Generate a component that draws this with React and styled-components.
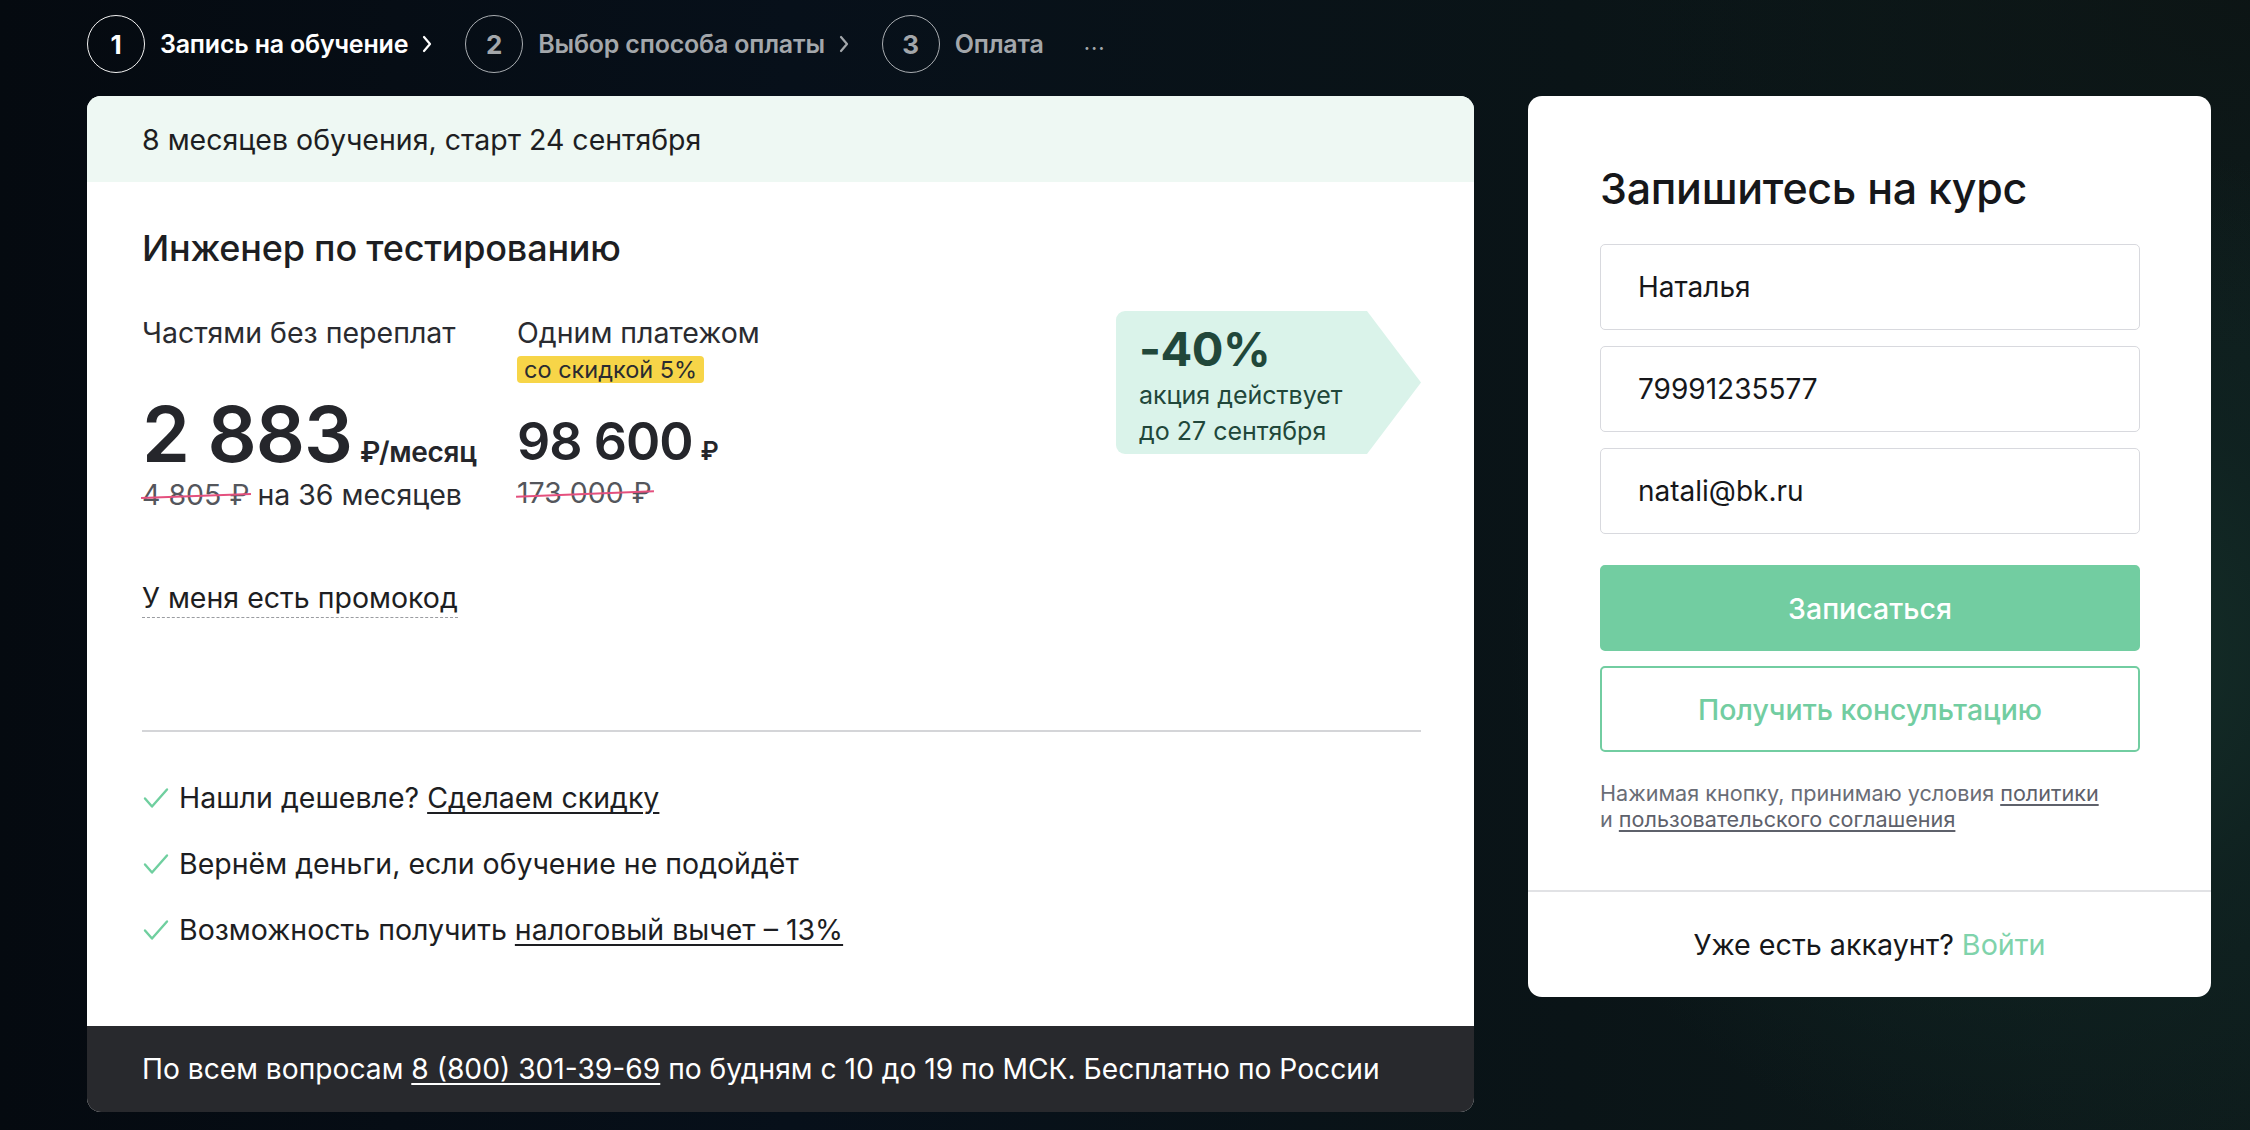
import React from "react";
import styled, { createGlobalStyle } from "styled-components";

const Global = createGlobalStyle`
  html, body { margin: 0; padding: 0; }
  body {
    font-family: Inter, "Noto Sans", Arial, sans-serif;
    background: #060b11;
    -webkit-font-smoothing: antialiased;
  }
  * { box-sizing: border-box; }
`;

const Page = styled.div`
  width: 2250px;
  height: 1130px;
  overflow: hidden;
  padding: 15px 0 0 87px;
  background:
    radial-gradient(ellipse 700px 650px at 92% 58%, rgba(22, 50, 43, 0.95) 0%, rgba(16, 36, 34, 0.7) 40%, rgba(10, 20, 22, 0) 80%),
    radial-gradient(ellipse 900px 500px at 100% 0%, rgba(12, 20, 20, 0.9) 0%, rgba(12, 20, 20, 0) 70%),
    linear-gradient(90deg, #050a10 0%, #07101a 35%, #0a1417 70%, #0e1c1c 100%);
`;

const Stepper = styled.nav`
  display: flex;
  align-items: center;
  height: 58px;
`;

const StepCircle = styled.span`
  width: 58px;
  height: 58px;
  border-radius: 50%;
  border: 1.5px solid ${(p) => (p.$active ? "#f2f2f2" : "#a9adb1")};
  display: flex;
  align-items: center;
  justify-content: center;
  font-size: 26px;
  font-weight: 700;
  color: ${(p) => (p.$active ? "#ffffff" : "#a3a7ab")};
  flex-shrink: 0;
`;

const StepLabel = styled.span`
  margin-left: 15px;
  font-size: 25px;
  font-weight: 600;
  letter-spacing: -0.2px;
  color: ${(p) => (p.$active ? "#ffffff" : "#a3a7ab")};
  white-space: nowrap;
`;

const Chevron = styled.svg`
  margin: 0 33px 0 14px;
  flex-shrink: 0;
`;

const Dots = styled.span`
  margin-left: 40px;
  font-size: 22px;
  color: #a3a7ab;
  letter-spacing: 1px;
  transform: translateY(-2px);
`;

const Columns = styled.div`
  display: flex;
  align-items: flex-start;
  gap: 54px;
  margin-top: 23px;
`;

const CourseCard = styled.section`
  width: 1387px;
  height: 1016px;
  background: #ffffff;
  border-radius: 14px;
  overflow: hidden;
  display: flex;
  flex-direction: column;
  color: #1d1e22;
`;

const CardTop = styled.div`
  height: 86px;
  background: #eef8f3;
  display: flex;
  align-items: center;
  padding-left: 55px;
  font-size: 28.5px;
  color: #1d1e22;
`;

const CardBody = styled.div`
  padding: 0 53px 0 55px;
  display: flex;
  flex-direction: column;
`;

const CourseTitle = styled.h2`
  margin: 46px 0 0;
  font-size: 36px;
  line-height: 40px;
  font-weight: 500;
  letter-spacing: -0.2px;
`;

const PriceRow = styled.div`
  display: flex;
  align-items: flex-start;
  margin-top: 48px;
`;

const PriceCol = styled.div`
  width: ${(p) => p.$w || "auto"};
  display: flex;
  flex-direction: column;
  align-items: flex-start;
`;

const PriceLabel = styled.div`
  font-size: 28.5px;
  line-height: 34px;
  color: #2a2b30;
  white-space: nowrap;
`;

const SaleTag = styled.span`
  margin-top: 6px;
  background: #f7d548;
  border-radius: 4px;
  padding: 0 7px;
  height: 27px;
  line-height: 27px;
  font-size: 23.5px;
  color: #2a2b30;
`;

const BigPrice = styled.div`
  display: flex;
  align-items: baseline;
  font-weight: 600;
  color: #25262b;
  margin-top: ${(p) => p.$mt || "0"};
  white-space: nowrap;
`;

const BigNum = styled.span`
  font-size: ${(p) => p.$size};
  line-height: ${(p) => p.$lh};
  letter-spacing: -1px;
`;

const Unit = styled.span`
  font-size: ${(p) => p.$size};
  line-height: 1;
  margin-left: 8px;
  letter-spacing: -0.3px;
`;

const OldPrice = styled.div`
  margin-top: 3px;
  font-size: 28.5px;
  line-height: 32px;
  color: #2a2b30;
  white-space: nowrap;
`;

const Struck = styled.span`
  position: relative;
  color: #54565c;
  &::after {
    content: "";
    position: absolute;
    left: -1px;
    right: -2px;
    top: 52%;
    height: 2px;
    background: #e4507e;
    transform: rotate(-2.2deg);
  }
`;

const PromoBadge = styled.div`
  margin-left: auto;
  margin-top: -5px;
  width: 305px;
  height: 143px;
  background: #daf3ea;
  border-radius: 9px;
  clip-path: polygon(0 0, 82.3% 0, 100% 50%, 82.3% 100%, 0 100%);
  padding: 10px 0 0 23px;
  color: #21473a;
`;

const PromoBig = styled.div`
  font-size: 47px;
  line-height: 56px;
  font-weight: 700;
  letter-spacing: -0.5px;
`;

const PromoText = styled.div`
  font-size: 25px;
  line-height: 36px;
`;

const PromoLink = styled.span`
  align-self: flex-start;
  margin-top: 70px;
  font-size: 28.5px;
  line-height: 34px;
  color: #1d1e22;
  border-bottom: 1.5px dashed #9a9ca1;
  padding-bottom: 2px;
`;

const Divider = styled.hr`
  margin: ${(p) => p.$m || "0"};
  border: 0;
  border-top: 2px solid #d4d5d8;
`;

const Perks = styled.ul`
  list-style: none;
  margin: 48px 0 0;
  padding: 0;
  display: flex;
  flex-direction: column;
  gap: 30px;
`;

const Perk = styled.li`
  display: flex;
  align-items: center;
  font-size: 28.5px;
  line-height: 36px;
  color: #1d1e22;
  svg { margin: 0 10px 0 1px; flex-shrink: 0; }
`;

const Link = styled.span`
  text-decoration: underline;
  text-decoration-thickness: 2px;
  text-underline-offset: 4px;
  color: ${(p) => p.$color || "inherit"};
`;

const CardFooter = styled.footer`
  margin-top: auto;
  height: 86px;
  background: #28292d;
  display: flex;
  align-items: center;
  padding-left: 55px;
  font-size: 28.2px;
  color: #ffffff;
`;

const FormCard = styled.section`
  width: 683px;
  height: 901px;
  background: #ffffff;
  border-radius: 14px;
  display: flex;
  flex-direction: column;
`;

const FormBody = styled.div`
  padding: 67px 71px 0 72px;
  display: flex;
  flex-direction: column;
`;

const FormTitle = styled.h2`
  margin: 0;
  font-size: 43px;
  line-height: 50px;
  font-weight: 500;
  color: #16171a;
  letter-spacing: -0.3px;
`;

const Fields = styled.div`
  margin-top: 31px;
  display: flex;
  flex-direction: column;
  gap: 16px;
`;

const Field = styled.div`
  height: 86px;
  border: 1.5px solid #d8d9de;
  border-radius: 5px;
  display: flex;
  align-items: center;
  padding-left: 37px;
  font-size: 28px;
  color: #16171a;
`;

const Button = styled.div`
  height: 86px;
  border-radius: 5px;
  display: flex;
  align-items: center;
  justify-content: center;
  font-size: 28.5px;
  font-weight: 500;
  margin-top: ${(p) => p.$mt};
  background: ${(p) => (p.$outline ? "#ffffff" : "#72cda1")};
  color: ${(p) => (p.$outline ? "#72cda1" : "#ffffff")};
  border: 2px solid #72cda1;
`;

const Note = styled.p`
  margin: 28px 0 0;
  font-size: 21.6px;
  line-height: 26px;
  color: #6a6d76;
`;

const NoteLink = styled.span`
  color: #5e616b;
  text-decoration: underline;
  text-decoration-thickness: 1.5px;
  text-underline-offset: 3px;
`;

const FormFooter = styled.div`
  margin-top: auto;
  height: 107px;
  border-top: 2px solid #e1e2e5;
  display: flex;
  align-items: center;
  justify-content: center;
  font-size: 28.7px;
  color: #16171a;
`;

const Login = styled.span`
  color: #7fd3ab;
  margin-left: 8px;
`;

const Check = () => (
  <svg width="26" height="22" viewBox="0 0 26 22" fill="none">
    <path d="M2 11.5 L9 19.5 L24 2.5" stroke="#6fcf9f" strokeWidth="2.4" strokeLinecap="round" strokeLinejoin="round" />
  </svg>
);

const ChevronIcon = ({ color }) => (
  <Chevron width="10" height="18" viewBox="0 0 10 18" fill="none">
    <path d="M2 2 L8 9 L2 16" stroke={color} strokeWidth="2.2" strokeLinecap="round" strokeLinejoin="round" />
  </Chevron>
);

export default function App() {
  return (
    <>
      <Global />
      <Page>
        <Stepper>
          <StepCircle $active>1</StepCircle>
          <StepLabel $active>Запись на обучение</StepLabel>
          <ChevronIcon color="#ffffff" />
          <StepCircle>2</StepCircle>
          <StepLabel>Выбор способа оплаты</StepLabel>
          <ChevronIcon color="#a3a7ab" />
          <StepCircle>3</StepCircle>
          <StepLabel>Оплата</StepLabel>
          <Dots>...</Dots>
        </Stepper>

        <Columns>
          <CourseCard>
            <CardTop>8 месяцев обучения, старт 24 сентября</CardTop>
            <CardBody>
              <CourseTitle>Инженер по тестированию</CourseTitle>
              <PriceRow>
                <PriceCol $w="375px">
                  <PriceLabel>Частями без переплат</PriceLabel>
                  <BigPrice $mt="42px">
                    <BigNum $size="77px" $lh="84px">2 883</BigNum>
                    <Unit $size="28px">₽/месяц</Unit>
                  </BigPrice>
                  <OldPrice>
                    <Struck>4 805 ₽</Struck> на 36 месяцев
                  </OldPrice>
                </PriceCol>
                <PriceCol>
                  <PriceLabel>Одним платежом</PriceLabel>
                  <SaleTag>со скидкой 5%</SaleTag>
                  <BigPrice $mt="27px">
                    <BigNum $size="52px" $lh="64px">98 600</BigNum>
                    <Unit $size="25px">₽</Unit>
                  </BigPrice>
                  <OldPrice>
                    <Struck>173 000 ₽</Struck>
                  </OldPrice>
                </PriceCol>
                <PromoBadge>
                  <PromoBig>-40%</PromoBig>
                  <PromoText>акция действует</PromoText>
                  <PromoText>до 27 сентября</PromoText>
                </PromoBadge>
              </PriceRow>
              <PromoLink>У меня есть промокод</PromoLink>
              <Divider $m="112px 0 0" />
              <Perks>
                <Perk>
                  <Check />
                  <span>
                    Нашли дешевле? <Link>Сделаем скидку</Link>
                  </span>
                </Perk>
                <Perk>
                  <Check />
                  <span>Вернём деньги, если обучение не подойдёт</span>
                </Perk>
                <Perk>
                  <Check />
                  <span>
                    Возможность получить <Link>налоговый вычет – 13%</Link>
                  </span>
                </Perk>
              </Perks>
            </CardBody>
            <CardFooter>
              <span>
                По всем вопросам <Link>8 (800) 301-39-69</Link> по будням с 10 до 19 по МСК. Бесплатно по России
              </span>
            </CardFooter>
          </CourseCard>

          <FormCard>
            <FormBody>
              <FormTitle>Запишитесь на курс</FormTitle>
              <Fields>
                <Field>Наталья</Field>
                <Field>79991235577</Field>
                <Field>natali@bk.ru</Field>
              </Fields>
              <Button $mt="31px">Записаться</Button>
              <Button $mt="15px" $outline>
                Получить консультацию
              </Button>
              <Note>
                Нажимая кнопку, принимаю условия <NoteLink>политики</NoteLink>
                <br />и <NoteLink>пользовательского соглашения</NoteLink>
              </Note>
            </FormBody>
            <FormFooter>
              Уже есть аккаунт?<Login>Войти</Login>
            </FormFooter>
          </FormCard>
        </Columns>
      </Page>
    </>
  );
}
